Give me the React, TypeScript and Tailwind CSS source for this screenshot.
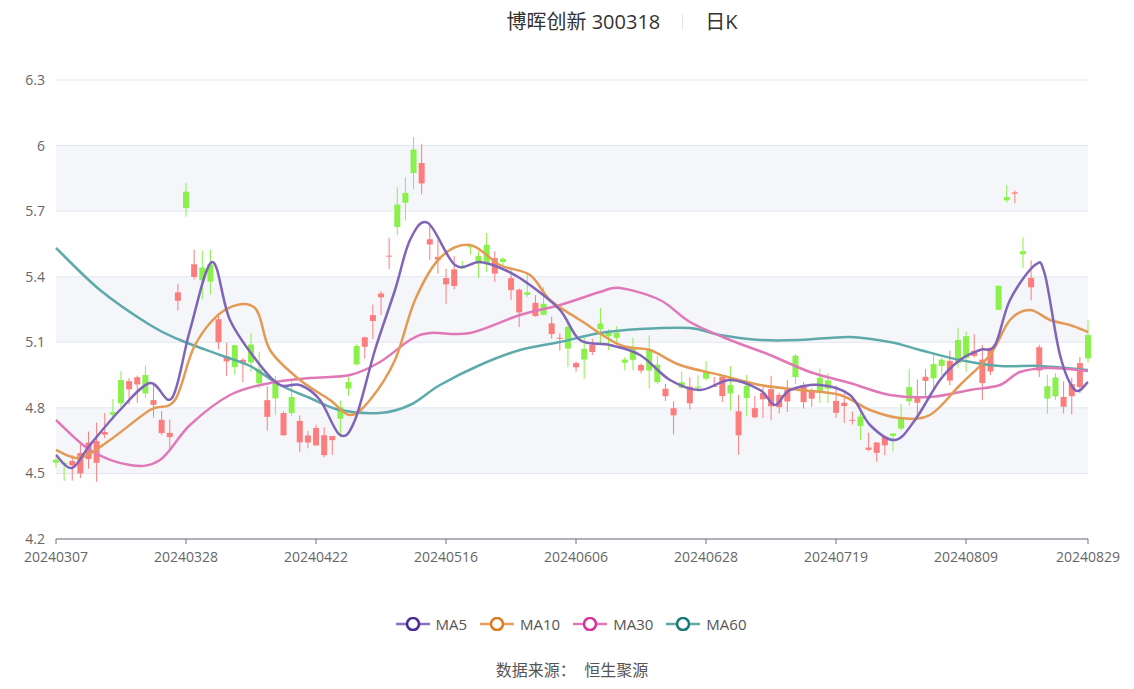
import React from "react";

const Y = (p: number) => 80 + ((6.3 - p) / 2.1) * 459;

const closeKeys: [number, number][] = [
  [56, 4.55], [75, 4.55], [110, 4.75], [135, 4.97], [150, 4.85], [170, 4.72], [178, 5.3], [185, 5.75], [195, 5.45],
  [210, 5.35], [230, 5.0], [250, 5.02], [270, 4.85], [290, 4.78], [310, 4.7], [330, 4.65], [345, 4.8], [360, 5.1],
  [380, 5.3], [395, 5.6], [410, 5.8], [420, 6.0], [430, 5.55], [450, 5.4], [470, 5.5], [500, 5.45], [520, 5.35],
  [545, 5.25], [560, 5.1], [576, 4.98], [590, 5.1], [610, 5.15], [625, 5.0], [650, 4.98], [670, 4.82], [690, 4.9],
  [720, 4.95], [740, 4.8], [760, 4.85], [780, 4.9], [800, 4.95], [830, 4.85], [850, 4.8], [865, 4.65], [885, 4.65],
  [900, 4.7], [915, 4.85], [940, 5.0], [960, 5.05], [990, 5.05], [1000, 5.3], [1010, 6.0], [1020, 5.6], [1030, 5.4],
  [1045, 4.85], [1060, 4.8], [1075, 4.95], [1088, 5.0],
];

function interp(x: number) {
  for (let i = 0; i < closeKeys.length - 1; i++) {
    const [x0, y0] = closeKeys[i];
    const [x1, y1] = closeKeys[i + 1];
    if (x >= x0 && x <= x1) return y0 + ((y1 - y0) * (x - x0)) / (x1 - x0);
  }
  return closeKeys[closeKeys.length - 1][1];
}

let seed = 7;
const rnd = () => {
  seed = (seed * 9301 + 49297) % 233280;
  return seed / 233280;
};

const N = 128;
const step = (1088 - 56) / (N - 1);
const candles = Array.from({ length: N }, (_, i) => {
  const x = 56 + i * step;
  const c = interp(x) + (rnd() - 0.5) * 0.08;
  const o = c + (rnd() - 0.5) * 0.22;
  const hi = Math.max(o, c) + rnd() * 0.09;
  const lo = Math.min(o, c) - rnd() * 0.09;
  return { x, o, c, hi, lo };
});

type P = [number, number];
const ma5: P[] = [[56,455],[72,468],[90,445],[120,410],[150,383],[172,398],[190,330],[212,262],[230,320],[260,365],[280,385],[300,385],[320,400],[340,435],[355,420],[375,350],[395,290],[410,240],[428,223],[455,265],[480,262],[505,270],[530,285],[560,310],[580,340],[610,345],[640,355],[670,380],[700,390],[730,380],[760,390],[775,405],[790,390],[820,385],[850,395],[870,425],[895,440],[915,420],[940,380],[960,360],[980,350],[995,345],[1010,300],[1035,265],[1045,275],[1060,355],[1075,390],[1088,382]];
const ma10: P[] = [[56,450],[80,458],[110,440],[150,410],[175,400],[195,345],[225,310],[255,308],[270,350],[300,380],[330,400],[350,415],[370,400],[395,360],[415,300],[440,258],[470,245],[500,265],[530,275],[550,300],[580,320],[620,345],[650,350],[680,365],[720,375],[760,385],[800,390],[840,395],[870,410],[900,418],[930,415],[960,385],[990,355],[1010,320],[1030,310],[1050,320],[1070,325],[1088,332]];
const ma30: P[] = [[56,420],[90,450],[130,465],[160,460],[190,425],[230,395],[270,383],[310,378],[350,375],[380,362],[410,340],[430,333],[470,333],[520,315],[560,305],[600,292],[620,288],[660,300],[690,322],[730,340],[770,355],[810,372],[850,383],[890,395],[930,397],[970,390],[1000,385],[1020,372],[1050,368],[1088,371]];
const ma60: P[] = [[56,248],[100,290],[150,325],[180,340],[220,355],[250,366],[280,385],[310,398],[340,410],[380,413],[410,405],[440,385],[480,365],[520,350],[560,342],[600,333],[640,329],[690,328],[720,335],[760,340],[800,340],[850,337],[890,342],[920,350],[960,360],[1000,366],[1040,366],[1088,370]];

function smooth(pts: P[]) {
  let d = `M${pts[0][0]},${pts[0][1]}`;
  for (let i = 0; i < pts.length - 1; i++) {
    const p0 = pts[i - 1] || pts[i];
    const p1 = pts[i];
    const p2 = pts[i + 1];
    const p3 = pts[i + 2] || p2;
    const c1x = p1[0] + (p2[0] - p0[0]) / 6, c1y = p1[1] + (p2[1] - p0[1]) / 6;
    const c2x = p2[0] - (p3[0] - p1[0]) / 6, c2y = p2[1] - (p3[1] - p1[1]) / 6;
    d += ` C${c1x},${c1y} ${c2x},${c2y} ${p2[0]},${p2[1]}`;
  }
  return d;
}

const grid = [6.3, 6, 5.7, 5.4, 5.1, 4.8, 4.5, 4.2];
const xlabels = ["20240307","20240328","20240422","20240516","20240606","20240628","20240719","20240809","20240829"];
const xl = [56,186,316,446,576,706,836,966,1088];

const legend = [
  { n: "MA5", line: "#8a70c0", c: "#4a2a98" },
  { n: "MA10", line: "#e8a060", c: "#e07a1c" },
  { n: "MA30", line: "#e078b8", c: "#d3359a" },
  { n: "MA60", line: "#5eaaaa", c: "#167a7a" },
];

export default function App() {
  const font = { fontFamily: '"Open Sans","Noto Sans CJK SC",sans-serif' };
  return (
    <div className="w-[1134px] h-[689px] bg-white flex flex-col text-[#555]" style={font}>
      <div className="h-[44px] flex items-center justify-center gap-[22px] text-[20px] text-[#333] pl-[110px]">
        <span>博晖创新 300318</span>
        <span className="w-px h-[16px] bg-[#e5e5e5]" />
        <span>日K</span>
      </div>
      <svg width={1134} height={560} viewBox="0 44 1134 560">
        <rect x={56} y={80} width={1032} height={459} fill="#fefefe" />
        {[145, 277, 408].map((y) => (
          <rect key={y} x={56} y={y} width={1032} height={65.6} fill="#f5f6fa" />
        ))}
        {grid.map((g) => (
          <g key={g}>
            <line x1={56} x2={1088} y1={Y(g)} y2={Y(g)} stroke="#e3e7f0" strokeWidth={1} />
            <text x={45} y={Y(g) + 5} textAnchor="end" fontSize={14} fill="#666">{g}</text>
          </g>
        ))}
        <line x1={56} x2={1088} y1={539} y2={539} stroke="#6e7079" />
        {xl.map((x, i) => (
          <g key={x}>
            <line x1={x} x2={x} y1={539} y2={544} stroke="#6e7079" />
            <text x={x} y={562} textAnchor="middle" fontSize={14} fill="#666">{xlabels[i]}</text>
          </g>
        ))}
        {candles.map((k, i) => {
          const up = k.c >= k.o;
          const col = up ? "#fb7d7d" : "#8af04c";
          const top = Y(Math.max(k.o, k.c));
          const bot = Y(Math.min(k.o, k.c));
          return (
            <g key={i}>
              <line x1={k.x} x2={k.x} y1={Y(k.hi)} y2={Y(k.lo)} stroke={col} strokeWidth={1} />
              <rect x={k.x - 3} y={top} width={6} height={Math.max(1, bot - top)} fill={col} />
            </g>
          );
        })}
        <path d={smooth(ma60)} fill="none" stroke="#5eaaaa" strokeWidth={2.5} />
        <path d={smooth(ma30)} fill="none" stroke="#e078b8" strokeWidth={2.5} />
        <path d={smooth(ma10)} fill="none" stroke="#e39a55" strokeWidth={2.5} />
        <path d={smooth(ma5)} fill="none" stroke="#7f64b8" strokeWidth={2.5} />
      </svg>
      <div className="h-[40px] flex items-center justify-center gap-[13px] pl-[8px]">
        {legend.map((l) => (
          <div key={l.n} className="flex items-center gap-[6px] text-[15px] text-[#555]">
            <svg width={34} height={14}>
              <line x1={0} x2={34} y1={7} y2={7} stroke={l.line} strokeWidth={2.5} />
              <circle cx={17} cy={7} r={6} fill="#fff" stroke={l.c} strokeWidth={2.5} />
            </svg>
            <span>{l.n}</span>
          </div>
        ))}
      </div>
      <div className="mt-[14px] text-center text-[16px] text-[#555] pl-[10px]">数据来源：&nbsp;&nbsp;恒生聚源</div>
    </div>
  );
}
